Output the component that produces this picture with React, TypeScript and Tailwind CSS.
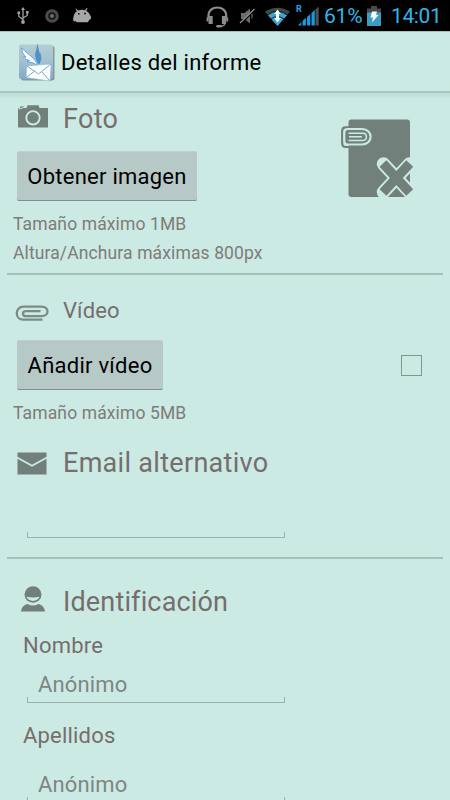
import { useState } from 'react';
import type { ReactNode } from 'react';

function StatusBar() {
  return (
    <div className="flex h-[31px] items-center bg-black text-[#33b5e5]">
      <svg className="ml-[17px]" width="12" height="17" viewBox="0 0 12 17" fill="none" stroke="#a3a3a3" strokeWidth="1.3">
        <path d="M6 15V2M6 12.5L1.8 9.5V6M6 11l4.2-2.5V5" />
        <path d="M6 0l2 3H4z" fill="#a3a3a3" stroke="none" />
        <circle cx="6" cy="15" r="1.9" fill="#a3a3a3" stroke="none" />
        <path d="M.5 4.5h2.6v2.6H.5zM9 4h2.6v2.6H9z" fill="#a3a3a3" stroke="none" />
      </svg>
      <svg className="ml-4" width="14" height="14" viewBox="0 0 14 14">
        <circle cx="7" cy="7" r="6.8" fill="#4d4d4d" />
        <circle cx="7" cy="7" r="3" fill="none" stroke="#151515" strokeWidth="1.6" />
        <circle cx="7" cy="7" r="1.4" fill="#777" />
      </svg>
      <svg className="ml-[14px]" width="19" height="15" viewBox="0 0 19 15">
        <path
          d="M3.2.4l1.8 2.2Q8.7 1 12 2.2L13.8 0l.8.5-1.3 2.4Q16 4 17 7l1.300 2.200-1 2.200-1.300.6-1 2.300H3.800L3 13.300l-2.200.2L0 11l1-4Q1.800 4.500 3.800 3.300L2.500.8z"
          fill="#a6a6a6"
        />
        <circle cx="5.8" cy="5.8" r=".9" fill="#111" />
        <circle cx="12" cy="5.5" r=".9" fill="#111" />
      </svg>

      <svg className="mt-[2px] ml-[114px]" width="23" height="22" viewBox="0 0 23 22" fill="none" stroke="#8c8c8c">
        <path d="M2.5 12V9.5C2.5 4.5 6.5 1.500 11.300 1.500s8.900 3 8.900 8V12" strokeWidth="2.2" />
        <path d="M4.600 10v8M18 10v8" strokeWidth="4.2" />
        <path d="M1.500 11.500v4M21.200 11.500v4" strokeWidth="2" />
        <path d="M19 17c0 2-1.500 3-4 3.200" strokeWidth="1.200" />
        <path d="M11.500 20.200h3.300" strokeWidth="2.600" strokeLinecap="round" />
      </svg>
      <svg className="mt-px ml-[10px]" width="17" height="18" viewBox="0 0 17 18">
        <path d="M2 6h3.500L11 1.500v15L5.500 12H2z" fill="#6b6b6b" />
        <path d="M2 16.500L16.500 2.500" stroke="#000" strokeWidth="1.500" />
        <path d="M1 16L15.500 2" stroke="#8a8a8a" strokeWidth="1.400" />
        <path d="M12.500 7q1.500 2 0 4.500" stroke="#5e5e5e" strokeWidth="1.300" fill="none" />
      </svg>
      <svg className="mt-px ml-[9px]" width="25" height="19" viewBox="0 0 25 19">
        <path d="M0 4.800Q12.500-3.500 25 4.800L12.500 19z" fill="#404a4d" />
        <path d="M3 8.200Q12.500 1.500 22 8.200L12.500 19z" fill="#3ea4cc" />
        <path d="M2.500 7.800Q12.500.8 22.500 7.800M6 12Q12.500 7 19 12" stroke="#07151b" strokeWidth=".9" fill="none" />
        <path d="M12.500 2.500l3.300 4.500h-1.800v4h1.800l-3.300 4.500-3.300-4.500h1.800V7H9.200z" fill="#fff" />
      </svg>
      <div className="relative ml-[6px] h-5 w-[23px]">
        <span className="absolute -top-px left-0 font-[Roboto] text-[9px] leading-none font-bold text-[#20a7e8]">R</span>
        <svg className="absolute top-0 left-0" width="23" height="20" viewBox="0 0 23 20">
          <path d="M2 19.500l3.300-3.500v3.500zM6.500 15l3.400-3.200v7.700H6.500zM11 11l3.300-3v11.500H11zM15.500 7L18.800 4v15.500h-3.300z" fill="#169be0" />
          <path d="M19.500 3.500L22.700.5v19h-3.200z" fill="#505050" />
        </svg>
      </div>
      <span className="mt-[2px] ml-[5px] w-[37px] text-[21px] leading-[31px] tracking-[-0.2px]">61%</span>
      <svg className="ml-[6px]" width="14" height="20" viewBox="0 0 14 20">
        <path d="M4 0h6v2.500h4V7H0V2.500h4z" fill="#4a4a4a" />
        <path d="M0 6.500h14V20H0z" fill="#3b9dc0" />
        <path d="M5 5.500h5L9 9h2.500L5 16.500l1-5H3.500z" fill="#f3f7f8" />
      </svg>
      <span className="mt-[2px] ml-[10px] text-[21px] leading-[31px] tracking-[-0.4px] whitespace-nowrap">14:01</span>
    </div>
  );
}

function AppIcon() {
  return (
    <svg width="37" height="40" viewBox="0 0 37 40">
      <defs>
        <linearGradient id="tile" x1="0" y1="0" x2="0" y2="1">
          <stop offset="0" stopColor="#b5cdd2" />
          <stop offset=".5" stopColor="#a3c0d2" />
          <stop offset="1" stopColor="#83a9c6" />
        </linearGradient>
      </defs>
      <rect x="2" y="4" width="33.5" height="34.5" rx="2" fill="#879995" />
      <rect x="0" y="2.5" width="34" height="34.500" rx="2" fill="url(#tile)" />
      <path d="M19.500 22C16 17 15.500 11 17 9l1.500-8 1 6 1.500 5 .3-2 1.200 7-2 5z" fill="#4c92c8" />
      <path d="M18.500 23C17 17 10 13 2.500 6c.5 5 2.500 7 4.500 9H4.500c2 2.500 4 3 6 3.500L8 19.500c4 1 7 1 9.500 3.500z" fill="#f4fbff" stroke="#5aa0d4" strokeWidth=".9" />
      <path d="M8 24l24-2-1 17L7 35.500z" fill="#fff" stroke="#90bce0" strokeWidth=".6" />
      <path d="M8 24l11.500 8L32 22M7 35.500l9-6.500M31 39l-8-9" fill="none" stroke="#72a9d8" strokeWidth="1" />
    </svg>
  );
}

function CameraIcon() {
  return (
    <svg width="30" height="23" viewBox="0 0 30 23">
      <path d="M0 3.500h2V1.500h4V3h2.500l1-2.700h11L21.500 3H30v19.500H0z" fill="#71807b" />
      <path d="M1 4.200L8.500 1.500" stroke="#cbeae3" strokeWidth=".9" />
      <circle cx="15" cy="12.800" r="6.700" fill="none" stroke="#cbeae3" strokeWidth="1.900" />
    </svg>
  );
}

function ClipIcon() {
  return (
    <svg width="35" height="18" viewBox="0 0 35 18" fill="none" stroke="#7b8c87" strokeWidth="2.3">
      <path d="M27.500 15.700H8.500C-.5 15.700-.5 2.700 8.500 2.700h18c8 0 8 9.500 0 9.500H11c-4 0-4-5 0-5h14.500" />
    </svg>
  );
}

function MailIcon() {
  return (
    <svg width="30" height="23" viewBox="0 0 30 23" fill="#71807b">
      <path d="M.5.5h29v4.300L15 12.800.5 4.800z" />
      <path d="M.5 6.700L15 14.700l14.500-8v15.800H.5z" />
    </svg>
  );
}

function PersonIcon() {
  return (
    <svg width="24" height="26" viewBox="0 0 24 26">
      <path d="M0 25.500c.5-3.500 2-6 6.500-7.500q5.500 3 11 0c4.500 1.500 6 4 6.500 7.500z" fill="#71807b" />
      <ellipse cx="12" cy="8.500" rx="8.500" ry="8.300" fill="#71807b" />
      <path d="M5.500 10.800q6.500 1.200 13 0c-1.500 5.500-11.500 5.500-13 0z" fill="#cbeae3" />
    </svg>
  );
}

function NoPhotoIcon() {
  return (
    <svg width="74" height="82" viewBox="0 0 74 82">
      <rect x="8.5" y="1.5" width="61.500" height="77.500" rx="3" fill="#71807b" />
      <path d="M9 9.300H5.500Q2.200 9.300 2.200 13v12q0 4 3.300 4h3.500" fill="none" stroke="#71807b" strokeWidth="2.200" />
      <path d="M8 11h14c11.500 0 11.500 15.500 0 15.500H8C4.300 26.500 4.300 25 4.300 18.700S4.300 11 8 11z" fill="#71807b" stroke="#cbeae3" strokeWidth="2.100" />
      <path d="M8.500 15.200H23c4.500 0 4.500 7.200 0 7.200H8.500M9 18.800h13" fill="none" stroke="#cbeae3" strokeWidth="1.500" />
      <path d="M43.500 46L69.500 74M69.500 46L43.500 74" stroke="#cbeae3" strokeWidth="13.500" strokeLinecap="round" />
      <path d="M43 45.500L69.700 74.500M69.700 45.500L43 74.500" stroke="#71807b" strokeWidth="9.400" />
    </svg>
  );
}

function Heading({ icon, children, className }: { icon: ReactNode; children: ReactNode; className: string }) {
  return (
    <div className={`flex items-center whitespace-nowrap text-[#766e6d] ${className}`}>
      <div className="flex w-[63px] shrink-0">{icon}</div>
      <h2>{children}</h2>
    </div>
  );
}

function GrayButton({ children, className }: { children: ReactNode; className: string }) {
  return (
    <button
      type="button"
      className={`ml-[17px] block h-[50px] rounded-[2px] border-t border-b-[1.5px] border-t-[#c2d0cd] border-b-[#7e908b] bg-[#b7c9c6] text-center text-[22px] whitespace-nowrap text-black ${className}`}
    >
      {children}
    </button>
  );
}

function TextField({ placeholder, className }: { placeholder?: string; className?: string }) {
  return (
    <div className={`ml-[27px] flex w-[258px] flex-col ${className ?? ''}`}>
      <input
        type="text"
        placeholder={placeholder}
        className="h-9 w-full bg-transparent pl-[11px] text-[22px] tracking-[0.15px] text-black outline-none placeholder:text-[#7f8583]"
      />
      <div className="-mt-[5px] h-[6px] border-x border-b border-[#9bb3ad]" />
    </div>
  );
}

function Divider() {
  return <hr className="mx-[7px] h-[2px] border-0 bg-linear-to-b from-[#a0b8b2] to-[#adc8c1]" />;
}

export default function App() {
  const [hasVideo, setHasVideo] = useState(false);

  return (
    <div className="h-[800px] w-[450px] overflow-hidden bg-[#cbeae3] font-[Roboto,sans-serif]">
      <StatusBar />
      <header className="flex h-[62px] items-center border-t border-b-2 border-t-[#a5bdb8] border-b-[#aac4be] pl-[19px]">
        <AppIcon />
        <h1 className="mt-px ml-[5px] text-[22px] tracking-[0.25px] text-black">Detalles del informe</h1>
      </header>
      <div className="-mb-[6px] h-[6px] bg-linear-to-b from-[#bddbd4] to-[#cbeae3]" />

      <section className="flex h-[180px] justify-between">
        <div>
          <Heading icon={<div className="-mt-[6px] ml-[18px]"><CameraIcon /></div>} className="h-[52px] text-[27px] tracking-[0.3px]">
            Foto
          </Heading>
          <GrayButton className="mt-[6px] w-[180px] tracking-[0.25px]">Obtener imagen</GrayButton>
          <div className="mt-[9px] ml-[13px] text-[17.5px] leading-[29px] tracking-[0.12px] text-[#7f7b79]">
            <p>Tamaño máximo 1MB</p>
            <p>Altura/Anchura máximas 800px</p>
          </div>
        </div>
        <div className="mt-[25px] mr-[36px]">
          <NoPhotoIcon />
        </div>
      </section>
      <Divider />

      <section className="h-[170px] pt-[17px]">
        <Heading icon={<div className="mt-[6px] ml-[15px]"><ClipIcon /></div>} className="h-[36px] text-[22px] tracking-[0.1px]">
          Vídeo
        </Heading>
        <div className="mt-[12px] flex items-center justify-between">
          <GrayButton className="w-[146px] tracking-[0.25px]">Añadir vídeo</GrayButton>
          <input
            type="checkbox"
            checked={hasVideo}
            onChange={(e) => setHasVideo(e.target.checked)}
            className="mr-[28px] h-[21px] w-[21px] appearance-none border-[1.5px] border-[#82958f] checked:bg-[#82958f]"
          />
        </div>
        <p className="mt-[9px] ml-[13px] text-[17.5px] leading-[29px] tracking-[0.12px] text-[#7f7b79]">Tamaño máximo 5MB</p>
      </section>

      <section className="h-[112px]">
        <Heading icon={<div className="ml-[17px]"><MailIcon /></div>} className="h-[36px] text-[27px] tracking-[0.3px]">
          Email alternativo
        </Heading>
        <TextField className="mt-[20px]" />
      </section>
      <Divider />

      <section className="pt-[25px]">
        <Heading icon={<div className="-mt-[7px] ml-[21px]"><PersonIcon /></div>} className="h-[36px] text-[27px] tracking-[0.15px]">
          Identificación
        </Heading>
        <label className="mt-[11px] ml-[23px] block text-[22px] leading-[30px] tracking-[0.2px] text-[#766e6d]">Nombre</label>
        <TextField placeholder="Anónimo" className="mt-[5px]" />
        <label className="mt-[18px] ml-[23px] block text-[22px] leading-[30px] tracking-[0.2px] text-[#766e6d]">Apellidos</label>
        <TextField placeholder="Anónimo" className="mt-[15px]" />
      </section>
    </div>
  );
}
